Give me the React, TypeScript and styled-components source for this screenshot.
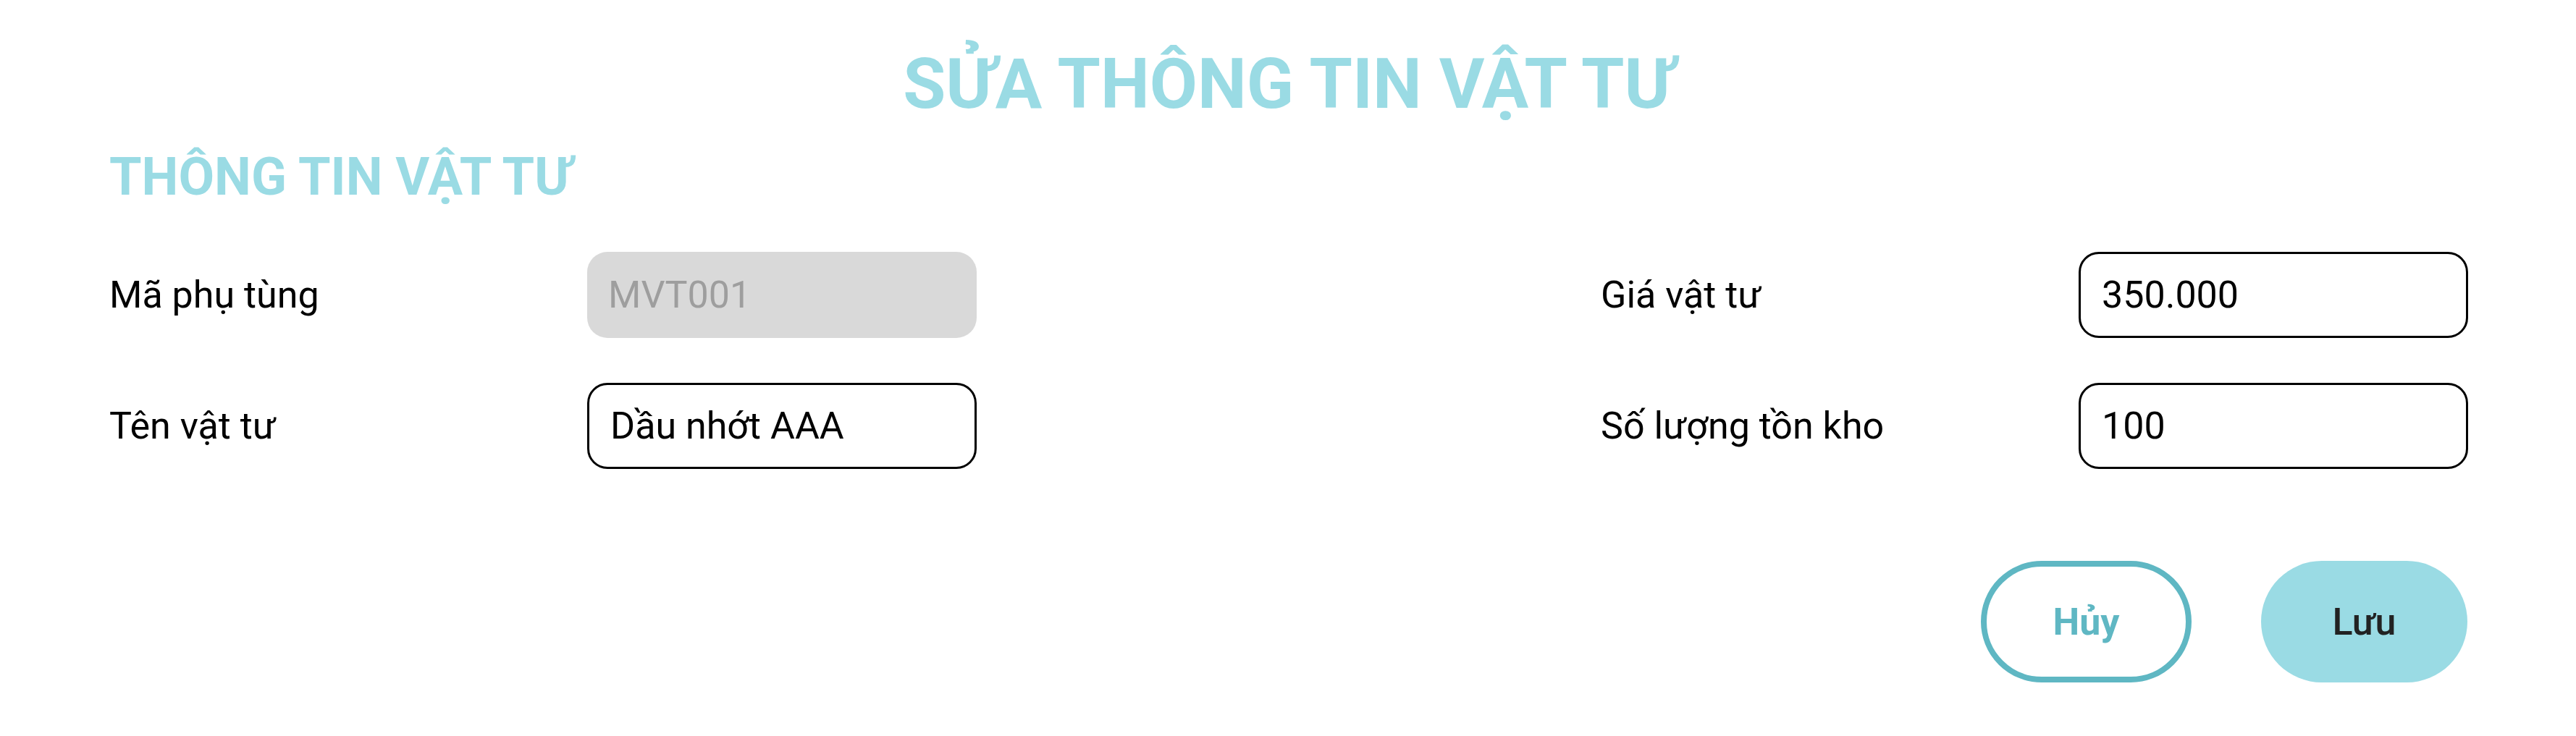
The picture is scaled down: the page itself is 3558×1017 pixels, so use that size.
import React from "react";
import styled, { createGlobalStyle } from "styled-components";

const Global = createGlobalStyle`
  html, body { margin: 0; padding: 0; background: #ffffff; }
  body { font-family: Roboto, "Noto Sans", Arial, sans-serif; }
  * { box-sizing: border-box; }
`;

const Page = styled.div`
  width: 3558px;
  min-height: 1017px;
  padding: 60px 150px 0 151px;
  font-family: Roboto, "Noto Sans", Arial, sans-serif;
`;

const Title = styled.h1`
  margin: 0;
  text-align: center;
  font-size: 96px;
  font-weight: 700;
  line-height: 112px;
  color: #9adbe4;
`;

const SectionTitle = styled.h2`
  margin: 31px 0 0 0;
  font-size: 72px;
  font-weight: 700;
  line-height: 84px;
  color: #9adbe4;
`;

const Fields = styled.div`
  margin-top: 61px;
  display: grid;
  grid-template-columns: 1199px 1197px;
  justify-content: space-between;
  row-gap: 62px;
`;

const Field = styled.label`
  display: grid;
  grid-template-columns: 660px 538px;
  align-items: center;
`;

const Label = styled.span`
  font-size: 52px;
  color: #000000;
`;

const Input = styled.input<{ $disabled?: boolean }>`
  width: 100%;
  height: 119px;
  padding: 0 29px;
  border-radius: 28px;
  border: ${(p) => (p.$disabled ? "none" : "3px solid #000000")};
  background: ${(p) => (p.$disabled ? "#d9d9d9" : "#ffffff")};
  color: ${(p) => (p.$disabled ? "#9e9e9e" : "#000000")};
  font-family: Roboto, "Noto Sans", Arial, sans-serif;
  font-size: 52px;
  outline: none;
`;

const Actions = styled.div`
  margin-top: 127px;
  display: flex;
  justify-content: flex-end;
  gap: 96px;
`;

const Button = styled.button<{ $variant: "outline" | "solid" }>`
  height: 168px;
  width: ${(p) => (p.$variant === "outline" ? "291px" : "285px")};
  border-radius: 999px;
  font-family: Roboto, "Noto Sans", Arial, sans-serif;
  font-size: 52px;
  cursor: pointer;
  border: ${(p) => (p.$variant === "outline" ? "8px solid #5fb7c3" : "none")};
  background: ${(p) => (p.$variant === "outline" ? "#ffffff" : "#9adbe4")};
  color: ${(p) => (p.$variant === "outline" ? "#5fb7c3" : "#222222")};
  font-weight: ${(p) => (p.$variant === "outline" ? 700 : 500)};
`;

type FieldDef = { label: string; value: string; disabled?: boolean };

const fields: FieldDef[] = [
  { label: "Mã phụ tùng", value: "MVT001", disabled: true },
  { label: "Giá vật tư", value: "350.000" },
  { label: "Tên vật tư", value: "Dầu nhớt AAA" },
  { label: "Số lượng tồn kho", value: "100" },
];

export default function App() {
  return (
    <>
      <Global />
      <Page>
        <Title>SỬA THÔNG TIN VẬT TƯ</Title>
        <SectionTitle>THÔNG TIN VẬT TƯ</SectionTitle>
        <Fields>
          {fields.map((f) => (
            <Field key={f.label}>
              <Label>{f.label}</Label>
              <Input
                $disabled={f.disabled}
                disabled={f.disabled}
                defaultValue={f.value}
              />
            </Field>
          ))}
        </Fields>
        <Actions>
          <Button $variant="outline">Hủy</Button>
          <Button $variant="solid">Lưu</Button>
        </Actions>
      </Page>
    </>
  );
}
